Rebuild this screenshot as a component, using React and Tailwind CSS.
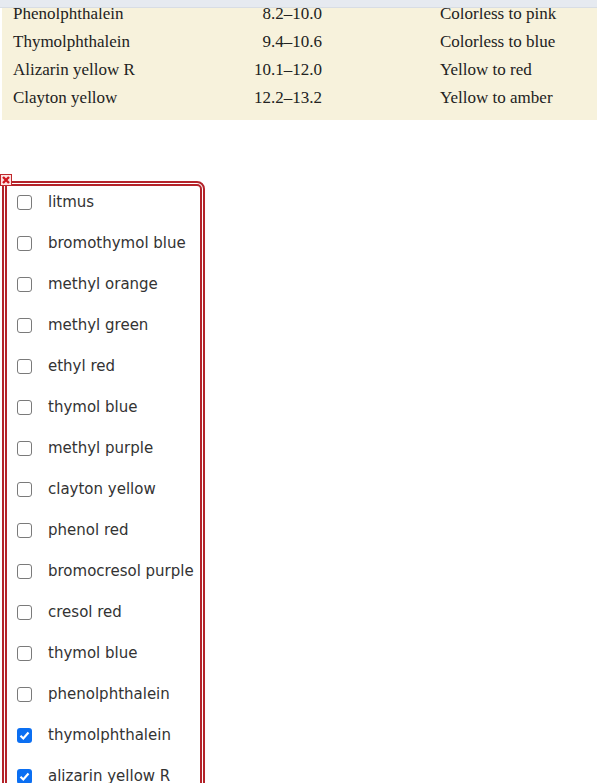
const rows = [
  ['Phenolphthalein', '8.2–10.0', 'Colorless to pink'],
  ['Thymolphthalein', '9.4–10.6', 'Colorless to blue'],
  ['Alizarin yellow R', '10.1–12.0', 'Yellow to red'],
  ['Clayton yellow', '12.2–13.2', 'Yellow to amber'],
];

const options = [
  ['litmus', false],
  ['bromothymol blue', false],
  ['methyl orange', false],
  ['methyl green', false],
  ['ethyl red', false],
  ['thymol blue', false],
  ['methyl purple', false],
  ['clayton yellow', false],
  ['phenol red', false],
  ['bromocresol purple', false],
  ['cresol red', false],
  ['thymol blue', false],
  ['phenolphthalein', false],
  ['thymolphthalein', true],
  ['alizarin yellow R', true],
];

function Box({ checked }) {
  if (checked) {
    return (
      <span className="flex items-center justify-center w-[15px] h-[15px] shrink-0 rounded-[3px] bg-[#0b6ff2]">
        <svg width="11" height="11" viewBox="0 0 11 11">
          <path d="M1.5 5.8 L4.3 8.5 L9.5 2.5" fill="none" stroke="#fff" strokeWidth="2.2" />
        </svg>
      </span>
    );
  }
  return <span className="w-[15px] h-[15px] shrink-0 rounded-[3px] border border-[#7a7a7a] bg-white" />;
}

export default function App() {
  return (
    <div className="relative w-[597px] h-[783px] overflow-hidden bg-white">
      {/* top bar overlapping the table */}
      <div className="absolute top-0 left-0 right-0 h-[8px] bg-[#e6eaf0] border-b border-[#d8dde4] z-10" />

      <div className="ml-[2px] bg-[#f7f2dc] pb-[8px] text-[#222]" style={{ fontFamily: '"Liberation Serif", serif' }}>
        {rows.map((r, i) => (
          <div key={i} className="flex items-center h-[28px] text-[17px]">
            <div className="w-[244px] pl-[11px]">{r[0]}</div>
            <div className="w-[76px] text-right">{r[1]}</div>
            <div className="pl-[118px]">{r[2]}</div>
          </div>
        ))}
      </div>

      <div className="relative mt-[61px] ml-[2px] w-[203px] h-[620px]">
        <span className="absolute -left-[2px] -top-[7px] z-10 flex items-center justify-center w-[12px] h-[12px] bg-[#fde4e4] border border-[#c0282d]">
          <svg width="8" height="8" viewBox="0 0 8 8">
            <path d="M1 1 L7 7 M7 1 L1 7" stroke="#d0161e" strokeWidth="2.4" />
          </svg>
        </span>
        <div className="h-full border-[5px] border-double border-[#b4232a] rounded-tr-[8px] pt-[7px] pl-[10px] flex flex-col gap-[23px]"
          style={{ fontFamily: '"DejaVu Sans", Verdana, sans-serif' }}>
          {options.map(([label, checked], i) => (
            <label key={i} className="flex items-center h-[18px] text-[15px] text-[#333] whitespace-nowrap">
              <Box checked={checked} />
              <span className="ml-[16px]">{label}</span>
            </label>
          ))}
        </div>
      </div>
    </div>
  );
}
